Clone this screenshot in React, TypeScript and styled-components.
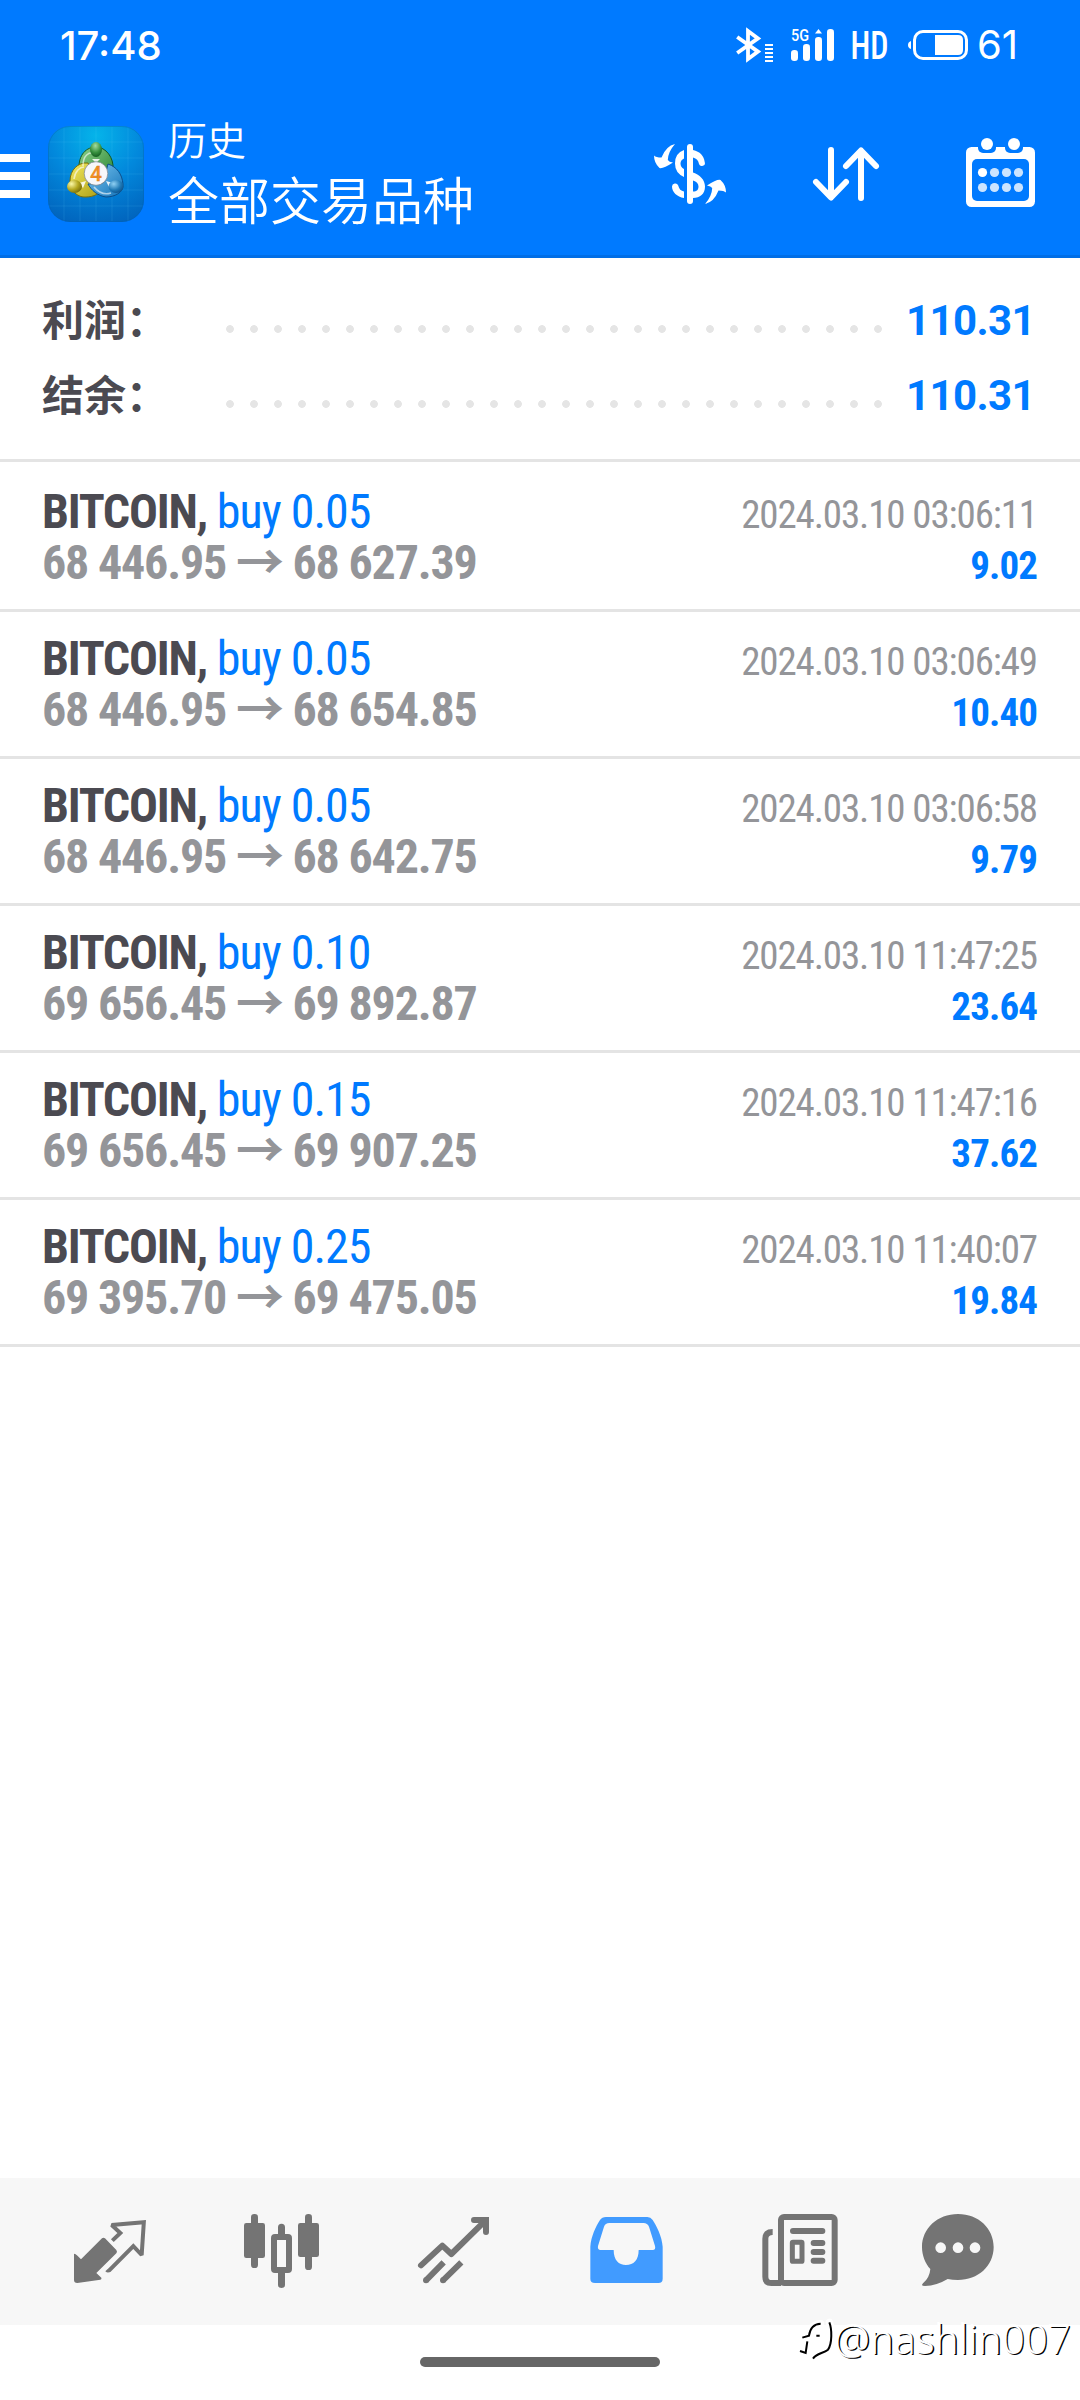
import React from "react";
import styled, { createGlobalStyle } from "styled-components";

const BLUE = "#007aff";
const GREY = "#949599";
const DARK = "#4b4a51";
const LINE = "#e4e4e4";
const CONDENSED = `"Roboto Condensed", Roboto, "Noto Sans CJK SC", sans-serif`;

const GlobalStyle = createGlobalStyle`
  * { box-sizing: border-box; }
  body { margin: 0; background: #fff; }
`;

const Screen = styled.div`
  position: relative;
  display: flex;
  flex-direction: column;
  width: 1080px;
  height: 2400px;
  overflow: hidden;
  background: #fff;
  font-family: Roboto, "Noto Sans CJK SC", sans-serif;
  white-space: nowrap;
`;

const Header = styled.header`
  height: 258px;
  flex: none;
  background: ${BLUE};
  border-bottom: 3px solid #006ee6;
  color: #fff;
`;

const StatusBar = styled.div`
  display: flex;
  align-items: center;
  height: 90px;
  padding: 0 63px 0 60px;
  font-family: Inter, sans-serif;
  font-size: 40px;
  font-weight: 500;
  line-height: 50px;
`;

const Clock = styled.span`
  flex: 1;
  padding-top: 2px;
`;

const StatusIcons = styled.div`
  display: flex;
  align-items: center;
  gap: 18px;

  svg { overflow: visible; }
`;

const Battery = styled.div`
  display: flex;
  align-items: center;
  gap: 9px;
  margin-left: 3px;
  font-weight: 400;
`;

const Level = styled.span`
  width: 40px;
`;

const AppBar = styled.div`
  display: flex;
  align-items: center;
  height: 168px;
  padding-right: 42px;
`;

const MenuButton = styled.div`
  display: flex;
  flex-direction: column;
  gap: 10px;
  width: 48px;
  padding-top: 4px;
`;

const MenuLine = styled.span`
  width: 30px;
  height: 8px;
  background: #fff;
`;

const Titles = styled.div`
  flex: 1;
  margin-left: 24px;
  font-family: "Noto Sans CJK SC", sans-serif;
  font-weight: 350;
`;

const Title = styled.div`
  font-size: 39px;
  line-height: 52px;
  margin-top: -4px;
`;

const Subtitle = styled.div`
  font-size: 51px;
  line-height: 68px;
`;

const Tools = styled.div`
  display: flex;
  gap: 84px;
`;

const Summary = styled.section`
  height: 204px;
  padding: 27px 42px 0;
  border-bottom: 3px solid ${LINE};
`;

const SummaryRow = styled.div`
  display: flex;
  align-items: flex-start;
  height: 75px;
`;

const SummaryLabel = styled.div`
  width: 176px;
  padding-top: 3px;
  color: ${DARK};
  font: 700 42px/60px "Noto Sans CJK SC", sans-serif;
`;

const Leader = styled.div`
  width: 672px;
  height: 8px;
  margin-top: 40px;
  background: radial-gradient(circle at 12px 4px, #e5e5e5 3.5px, transparent 4.2px) 0 0 / 24px 8px repeat-x;
`;

const SummaryValue = styled.div`
  flex: 1;
  text-align: right;
  color: ${BLUE};
  font-weight: 700;
  font-size: 42px;
  line-height: 60px;
  letter-spacing: -0.6px;
  padding: 6px 3px 0 0;
`;

const DealList = styled.section`
  padding-top: 3px;
`;

const Deal = styled.article`
  height: 147px;
  padding: 21px 42px 0;
  border-bottom: 3px solid ${LINE};
  font-family: ${CONDENSED};
`;

const DealLine = styled.div`
  display: flex;
  justify-content: space-between;
  align-items: baseline;
  height: 51px;
  font-size: 48px;
  line-height: 51px;
`;

const Symbol = styled.span`
  color: ${DARK};
  font-weight: 700;
  letter-spacing: -1.25px;
`;

const Side = styled.span`
  color: ${BLUE};
  font-weight: 400;
  letter-spacing: -1px;
`;

const Prices = styled.span`
  color: ${GREY};
  font-weight: 700;
  letter-spacing: -1.2px;
`;

const Time = styled.span`
  color: ${GREY};
  font-size: 39px;
  letter-spacing: -1.13px;
  padding-right: 1px;
`;

const Profit = styled.span`
  color: ${BLUE};
  font-size: 39px;
  font-weight: 700;
  letter-spacing: -0.9px;
  padding-right: 1px;
`;

const Spacer = styled.div`
  flex: 1;
`;

const NavBar = styled.nav`
  display: flex;
  gap: 76px;
  height: 147px;
  padding: 26px 0 0 62px;
  background: #f7f7f7;
`;

const NavIcon = styled.svg<{ $active?: boolean }>`
  width: 96px;
  height: 96px;
  color: ${(p) => (p.$active ? "#419bff" : "#747474")};
`;

const GestureArea = styled.div`
  display: flex;
  justify-content: center;
  height: 75px;
  padding-top: 32px;
`;

const GestureBar = styled.div`
  width: 240px;
  height: 10px;
  border-radius: 5px;
  background: #666;
`;

const Watermark = styled.div`
  position: absolute;
  right: 9px;
  bottom: 34px;
  display: flex;
  align-items: center;
  color: #fff;
  font: 300 40px/54px "Noto Sans", sans-serif;
  letter-spacing: 0.2px;
`;

const Handle = styled.span`
  text-shadow: 1.4px 0.6px 0 #000, -1px -1px 0 #fff;
`;

const deals = [
  { volume: "0.05", open: "68 446.95", close: "68 627.39", time: "2024.03.10 03:06:11", profit: "9.02" },
  { volume: "0.05", open: "68 446.95", close: "68 654.85", time: "2024.03.10 03:06:49", profit: "10.40" },
  { volume: "0.05", open: "68 446.95", close: "68 642.75", time: "2024.03.10 03:06:58", profit: "9.79" },
  { volume: "0.10", open: "69 656.45", close: "69 892.87", time: "2024.03.10 11:47:25", profit: "23.64" },
  { volume: "0.15", open: "69 656.45", close: "69 907.25", time: "2024.03.10 11:47:16", profit: "37.62" },
  { volume: "0.25", open: "69 395.70", close: "69 475.05", time: "2024.03.10 11:40:07", profit: "19.84" },
];

const totals = [
  { label: "利润：", value: "110.31" },
  { label: "结余：", value: "110.31" },
];

const BluetoothIcon = () => (
  <svg width="37" height="34" viewBox="0 0 37 34" fill="none">
    <path d="M1.2 9 L22 23.6 L12 31 V3 L22 10.4 L1.2 25" stroke="#fff" strokeWidth="3.8" />
    {[16, 20, 24, 28, 32].map((y) => (
      <rect key={y} x="29" y={y} width="8" height="2" fill="#fff" />
    ))}
  </svg>
);

const SignalIcon = () => (
  <svg width="43" height="32" viewBox="0 0 43 32" fill="#fff">
    <text x="0" y="12" fontFamily="Roboto" fontSize="16.5" fontWeight="500" textLength="18" lengthAdjust="spacingAndGlyphs">5G</text>
    <rect x="0" y="21" width="7" height="11" rx="3.2" />
    <rect x="12" y="15" width="7" height="17" rx="3.2" />
    <rect x="24" y="8" width="7" height="24" rx="3.2" />
    <rect x="36" y="0" width="7" height="32" rx="3.2" />
    <path d="M27.5 0 L31 4.6 H24Z" />
  </svg>
);

const HdIcon = () => (
  <svg width="35" height="32" viewBox="0 0 35 32" fill="#fff">
    <text x="-1.5" y="30" fontFamily="Roboto Condensed, Roboto" fontSize="39.5" fontWeight="500" textLength="38" lengthAdjust="spacingAndGlyphs">HD</text>
  </svg>
);

const BatteryIcon = () => (
  <svg width="60" height="30" viewBox="0 0 60 30" fill="#fff">
    <path d="M3 11 V19 Q0 18 0 15 Q0 12 3 11Z" />
    <rect x="6.5" y="1.5" width="52" height="27" rx="8.5" fill="none" stroke="#fff" strokeWidth="3" />
    <path d="M27 5 H50 Q55 5 55 10 V20 Q55 25 50 25 H27Z" />
  </svg>
);

const AppLogo = () => (
  <svg width="96" height="96" viewBox="0 0 96 96">
    <defs>
      <radialGradient id="tile" cx="0.5" cy="0.1" r="0.95">
        <stop offset="0" stopColor="#05b4ea" />
        <stop offset="0.5" stopColor="#0288dc" />
        <stop offset="1" stopColor="#0164bd" />
      </radialGradient>
      <linearGradient id="green" x1="0" y1="0" x2="1" y2="1">
        <stop offset="0" stopColor="#8fd18a" />
        <stop offset="1" stopColor="#1f7f2c" />
      </linearGradient>
      <linearGradient id="yellow" x1="0" y1="0" x2="1" y2="1">
        <stop offset="0" stopColor="#f4ea60" />
        <stop offset="1" stopColor="#a99a10" />
      </linearGradient>
      <linearGradient id="blue" x1="0" y1="0" x2="1" y2="1">
        <stop offset="0" stopColor="#7cc6f0" />
        <stop offset="1" stopColor="#1272b8" />
      </linearGradient>
      <radialGradient id="greenBall" cx="0.45" cy="0.25" r="0.75">
        <stop offset="0" stopColor="#a5dca0" />
        <stop offset="0.6" stopColor="#399240" />
        <stop offset="1" stopColor="#145d20" />
      </radialGradient>
      <radialGradient id="yellowBall" cx="0.3" cy="0.3" r="0.8">
        <stop offset="0" stopColor="#fbf8a8" />
        <stop offset="0.55" stopColor="#b5a820" />
        <stop offset="1" stopColor="#6f6608" />
      </radialGradient>
      <radialGradient id="blueBall" cx="0.35" cy="0.3" r="0.8">
        <stop offset="0" stopColor="#8fd0f3" />
        <stop offset="0.6" stopColor="#1e78b4" />
        <stop offset="1" stopColor="#0a4b85" />
      </radialGradient>
    </defs>
    <rect width="96" height="96" rx="22" fill="url(#tile)" />
    <g stroke="#6cd0ff" strokeOpacity="0.17" strokeWidth="0.8">
      {[16, 32, 48, 64, 80].map((p) => (
        <path key={p} d={`M${p} 1 V95 M1 ${p} H95`} />
      ))}
    </g>
    <rect x="0.5" y="0.5" width="95" height="95" rx="21.5" fill="none" stroke="#075fae" strokeOpacity="0.35" />
    <path d="M31 44 C30 28 39 21 48 21 C58 21 66 32 65 43 C65 50 62 57 60 60 L50 48 L38 37 Z" fill="url(#green)" stroke="#14571f" strokeWidth="1" />
    <path d="M40 37 C30 36 22 44 22 55 C21 64 30 72 38 71 C45 71 53 68 56 60 L46 51 Z" fill="url(#yellow)" stroke="#7c7008" strokeWidth="1" />
    <path d="M60 38 C69 41 74 48 75 58 C76 67 66 71 58 71 C50 70 43 64 40 58 L55 57 Z" fill="url(#blue)" stroke="#0b4f8c" strokeWidth="1" />
    <path d="M35 40 C35 29 41 26 46 27 M26 53 C27 45 32 41 36 41 M46 61 C51 67 57 69 63 67" fill="none" stroke="#fff" strokeOpacity="0.6" strokeWidth="1.6" />
    <path d="M31 57 L38 55 L35 62Z M58 55 L65 57 L61 61Z M44 33 L52 33 L48 37Z" fill="#fff" fillOpacity="0.85" />
    <ellipse cx="48" cy="23.5" rx="6" ry="7.5" fill="url(#greenBall)" />
    <ellipse cx="26.5" cy="60.5" rx="7.5" ry="6.5" fill="url(#yellowBall)" />
    <ellipse cx="68" cy="60.5" rx="7.5" ry="6.5" fill="url(#blueBall)" />
    <circle cx="48" cy="47.5" r="11.8" fill="#f7f7fa" stroke="#77808a" strokeWidth="0.7" />
    <text x="48" y="55" textAnchor="middle" fontFamily="Roboto" fontSize="21" fontWeight="500" fill="#f59226" stroke="#d5761c" strokeWidth="0.3">4</text>
  </svg>
);

const swapArrow = "M21 6 Q12 8 7.5 19.5 Q2 19.5 0 17.5 Q0 25 5.5 30 Q9 31 19 24.5 Q15 24 13.8 22 Q14 14 21 6Z";

const CurrencyIcon = () => (
  <svg width="72" height="72" viewBox="0 0 72 72" fill="#fff">
    <rect x="33" y="6" width="6" height="60" rx="3" />
    <path d="M30 12 Q21 15 21 25.5 Q21 35 30 39 V31 Q26.5 29 26.5 25.5 Q26.5 22 30 20.5Z" />
    <path d="M39 12 C46 13.5 50 18 50.7 24 A3 3 0 0 1 45 26 C44.5 22.5 42.5 20.5 39 19.5Z" />
    <path d="M39 34.5 C46 37 51 42 51 48.5 C51 56 46 60 39 60 V53.5 C43 53.5 44.5 51.5 44.5 48.5 C44.5 45.5 42.5 43.5 39 42.5Z" />
    <path d="M18 48.5 A3.2 3.2 0 0 1 24.2 47.5 C25 51 27 53 30 53.5 V60 C23 59 18 54 18 48.5Z" />
    <path d={swapArrow} />
    <path d={swapArrow} transform="rotate(180 36 36)" />
  </svg>
);

const SortIcon = () => (
  <svg width="72" height="72" viewBox="0 0 72 72" fill="none" stroke="#fff" strokeWidth="6" strokeLinecap="round" strokeLinejoin="round">
    <path d="M21 12 V59 M6 44 L21 59.5 L36 44" />
    <path d="M51 60 V13 M36 28 L51 12.5 L66 28" />
  </svg>
);

const CalendarIcon = () => (
  <svg width="72" height="72" viewBox="0 0 72 72">
    <rect x="0" y="9" width="69" height="60" rx="5.5" fill="#fff" />
    <rect x="12" y="0" width="18" height="15" rx="5" fill={BLUE} />
    <rect x="39" y="0" width="18" height="15" rx="5" fill={BLUE} />
    <circle cx="21" cy="6" r="6" fill="#fff" />
    <circle cx="48" cy="6" r="6" fill="#fff" />
    <rect x="6" y="21" width="57" height="42" rx="5" fill={BLUE} />
    {[34.5, 49.5].map((y) =>
      [16.5, 28.5, 40.5, 52.5].map((x) => (
        <circle key={`${x}-${y}`} cx={x} cy={y} r="4.6" fill="#fff" opacity={x < 20 && y < 40 ? 1 : 0.8} />
      ))
    )}
  </svg>
);

const QuotesIcon = () => (
  <NavIcon viewBox="6 12 288 288">
    <path fill="currentColor" d="M44 161 Q48 162 63 178 L126 115 Q130 111 135 115 L169 150 Q173 155 169 160 L109 219 L124 233 Q126 237 121 239 L52 249 Q42 249 42 240 V163Z" />
    <path fill="none" stroke="currentColor" strokeWidth="12" strokeMiterlimit="2" d="M157 122 L181 99 L155 75 L251.5 66.5 L245 165 L220 138.5 L147 212" />
    <path fill="currentColor" d="M136 214 L143 207 L152 215 Q148 218 140 217Z" />
  </NavIcon>
);

const ChartIcon = () => (
  <NavIcon viewBox="522 12 288 288" fill="currentColor">
    <rect x="573" y="42" width="21" height="162" rx="10" />
    <rect x="552" y="69" width="63" height="105" rx="7" />
    <rect x="735" y="42" width="21" height="168" rx="10" />
    <rect x="714" y="69" width="63" height="102" rx="7" />
    <path d="M654 105 V82 Q654 71 664.5 71 Q675 71 675 82 V105Z M654 215 V254 Q654 264 664.5 264 Q675 264 675 254 V215Z" />
    <rect x="642" y="111" width="45" height="99" rx="3" fill="none" stroke="currentColor" strokeWidth="18" />
  </NavIcon>
);

const TradeIcon = () => (
  <NavIcon viewBox="18 12 288 288" fill="none" stroke="currentColor" strokeWidth="18">
    <path d="M63 196 L127 137 L154 162 L256 62" strokeLinecap="round" strokeLinejoin="round" />
    <path d="M222 60 H258 V96" strokeLinecap="round" />
    <path d="M78 241 L131 187 M129 241 L184 187" />
    <circle cx="78" cy="240.5" r="9" fill="currentColor" stroke="none" />
    <circle cx="129" cy="240.5" r="9" fill="currentColor" stroke="none" />
  </NavIcon>
);

const HistoryIcon = () => (
  <NavIcon $active viewBox="534 12 288 288">
    <path
      fill="currentColor"
      fillRule="evenodd"
      d="M571 140 C573 110 588 78 600 60 Q606 51 618 51 H742 Q752 51 758 60 C770 78 786 110 788 140 V236 Q788 249 775 249 H585 Q571 249 571 236Z M628 69 Q616 69 612 80 L594 138 Q592 150 602 150 H641 C641 180 656 195 678 195 C701 195 716 180 716 150 H758 Q768 150 765 138 L747 80 Q742 69 731 69Z"
    />
  </NavIcon>
);

const NewsIcon = () => (
  <NavIcon viewBox="630 102 288 288" fill="none" stroke="currentColor" strokeWidth="18">
    <rect x="723" y="141" width="161" height="198" rx="9" />
    <path d="M698 186 Q676 186 676 206 V320 Q676 339 694 339 H723" />
    <path d="M759 183 H847 M821 219 H847 M821 246 H847 M821 272 H847" strokeLinecap="round" />
    <rect x="757" y="217" width="29" height="57" rx="2" strokeWidth="15" />
  </NavIcon>
);

const ChatIcon = () => (
  <NavIcon viewBox="1146 102 288 288">
    <path
      fill="currentColor"
      fillRule="evenodd"
      d="M1254 132 C1316 132 1361 176 1361 231 C1361 288 1314 330 1254 330 Q1237 330 1223 327 Q1190 347 1155 348 Q1141 348 1149 340 Q1169 323 1171 297 C1156 281 1146 257 1146 231 C1146 176 1192 132 1254 132Z M1186 233 a16 16 0 1 0 32 0 a16 16 0 1 0 -32 0Z M1238 233 a16 16 0 1 0 32 0 a16 16 0 1 0 -32 0Z M1289 233 a16 16 0 1 0 32 0 a16 16 0 1 0 -32 0Z"
    />
  </NavIcon>
);

const mark = "M120 56 C98 57 88 70 85 92 L65 98 M107 92 H117 M80 109 L75 144 L58 138 M146 52 C154 72 155 115 142 134 C128 146 108 144 97 161";

const WatermarkLogo = () => (
  <svg width="38" height="48" viewBox="46 30 114 144" fill="none">
    <path d={mark} stroke="#fff" strokeWidth="22" strokeLinejoin="round" strokeLinecap="round" />
    <path d={mark} stroke="#000" strokeWidth="6" />
  </svg>
);

export default function App() {
  return (
    <>
      <GlobalStyle />
      <Screen>
        <Header>
          <StatusBar>
            <Clock>17:48</Clock>
            <StatusIcons>
              <BluetoothIcon />
              <SignalIcon />
              <HdIcon />
              <Battery>
                <BatteryIcon />
                <Level>61</Level>
              </Battery>
            </StatusIcons>
          </StatusBar>
          <AppBar>
            <MenuButton>
              <MenuLine />
              <MenuLine />
              <MenuLine />
            </MenuButton>
            <AppLogo />
            <Titles>
              <Title>历史</Title>
              <Subtitle>全部交易品种</Subtitle>
            </Titles>
            <Tools>
              <CurrencyIcon />
              <SortIcon />
              <CalendarIcon />
            </Tools>
          </AppBar>
        </Header>

        <Summary>
          {totals.map((t) => (
            <SummaryRow key={t.label}>
              <SummaryLabel>{t.label}</SummaryLabel>
              <Leader />
              <SummaryValue>{t.value}</SummaryValue>
            </SummaryRow>
          ))}
        </Summary>

        <DealList>
          {deals.map((d) => (
            <Deal key={d.time}>
              <DealLine>
                <span>
                  <Symbol>BITCOIN, </Symbol>
                  <Side>buy {d.volume}</Side>
                </span>
                <Time>{d.time}</Time>
              </DealLine>
              <DealLine>
                <Prices>
                  {d.open} → {d.close}
                </Prices>
                <Profit>{d.profit}</Profit>
              </DealLine>
            </Deal>
          ))}
        </DealList>

        <Spacer />

        <NavBar>
          <QuotesIcon />
          <ChartIcon />
          <TradeIcon />
          <HistoryIcon />
          <NewsIcon />
          <ChatIcon />
        </NavBar>
        <GestureArea>
          <GestureBar />
        </GestureArea>

        <Watermark>
          <WatermarkLogo />
          <Handle>@nashlin007</Handle>
        </Watermark>
      </Screen>
    </>
  );
}
